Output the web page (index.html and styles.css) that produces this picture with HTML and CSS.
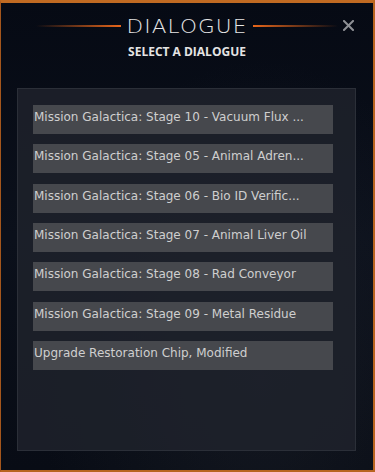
FILE: index.html
```
<!DOCTYPE html>
<html>
<head>
<meta charset="utf-8">
<link rel="stylesheet" href="styles.css">
</head>
<body>
<div class="frame">
  <header class="head">
    <div class="title-row">
      <span class="line line-left"></span>
      <h1 class="title">DIALOGUE</h1>
      <span class="line line-right"></span>
      <button class="close" aria-label="Close">
        <svg width="11" height="11" viewBox="0 0 11 11"><path d="M1 1 L10 10 M10 1 L1 10" stroke="#8e9095" stroke-width="2" stroke-linecap="square"/></svg>
      </button>
    </div>
    <div class="subtitle">SELECT A DIALOGUE</div>
  </header>
  <section class="panel">
    <ul class="list">
      <li class="item">Mission Galactica: Stage 10 - Vacuum Flux ...</li>
      <li class="item">Mission Galactica: Stage 05 - Animal Adren...</li>
      <li class="item">Mission Galactica: Stage 06 - Bio ID Verific...</li>
      <li class="item">Mission Galactica: Stage 07 - Animal Liver Oil</li>
      <li class="item">Mission Galactica: Stage 08 - Rad Conveyor</li>
      <li class="item">Mission Galactica: Stage 09 - Metal Residue</li>
      <li class="item">Upgrade Restoration Chip, Modified</li>
    </ul>
  </section>
</div>
</body>
</html>
```
FILE: styles.css
```
* { box-sizing: border-box; }
html, body { margin: 0; padding: 0; }
body {
  width: 375px;
  height: 472px;
  background: #05080f;
  font-family: "DejaVu Sans", sans-serif;
  overflow: hidden;
}
.frame {
  width: 375px;
  height: 472px;
  border: 1px solid #a4561c;
  border-top: 3px solid #c06a22;
  border-right: 2px solid #b8641f;
  border-bottom: 2px solid #b8641f;
  background:
    radial-gradient(ellipse at 70% 80%, rgba(40,44,52,0.35), transparent 60%),
    linear-gradient(180deg, #060a14 0%, #0b101b 50%, #080c15 100%);
  display: flex;
  flex-direction: column;
  align-items: center;
}
.head {
  width: 100%;
  display: flex;
  flex-direction: column;
  align-items: center;
}
.title-row {
  position: relative;
  width: 100%;
  display: flex;
  align-items: center;
  justify-content: center;
  height: 30px;
  margin-top: 8px;
}
.title {
  margin: 0 10px;
  font-family: "DejaVu Sans", sans-serif;
  font-weight: 200;
  font-size: 20px;
  letter-spacing: 1px;
  color: #e6e6e6;
  line-height: 30px;
  transform: scaleX(1.08);
}
.line {
  height: 2px;
  width: 85px;
}
.line-left { background: linear-gradient(90deg, rgba(232,102,26,0) 0%, #e8661a 100%); }
.line-right { background: linear-gradient(90deg, #e8661a 0%, rgba(232,102,26,0) 100%); }
.close {
  position: absolute;
  right: 19px;
  top: 9px;
  background: none;
  border: 0;
  padding: 0;
  width: 11px;
  height: 11px;
  display: block;
}
.close svg { display: block; }
.subtitle {
  margin-top: 3px;
  font-family: "Open Sans", sans-serif;
  font-weight: 700;
  font-size: 12px;
  color: #e4e4e4;
  line-height: 16px;
}
.panel {
  margin-top: 28px;
  width: 339px;
  height: 363px;
  margin-left: -1px;
  background: rgba(30,34,43,0.85);
  border: 1px solid #2b2f38;
  padding: 16px 0 0 15px;
}
.list {
  list-style: none;
  margin: 0;
  padding: 0;
  display: flex;
  flex-direction: column;
  gap: 10.33px;
}
.item {
  width: 300px;
  height: 29px;
  background: #46484d;
  color: #cfcfcf;
  font-size: 12px;
  line-height: 16px;
  padding: 4px 0 0 1px;
  white-space: nowrap;
  overflow: hidden;
}
```
